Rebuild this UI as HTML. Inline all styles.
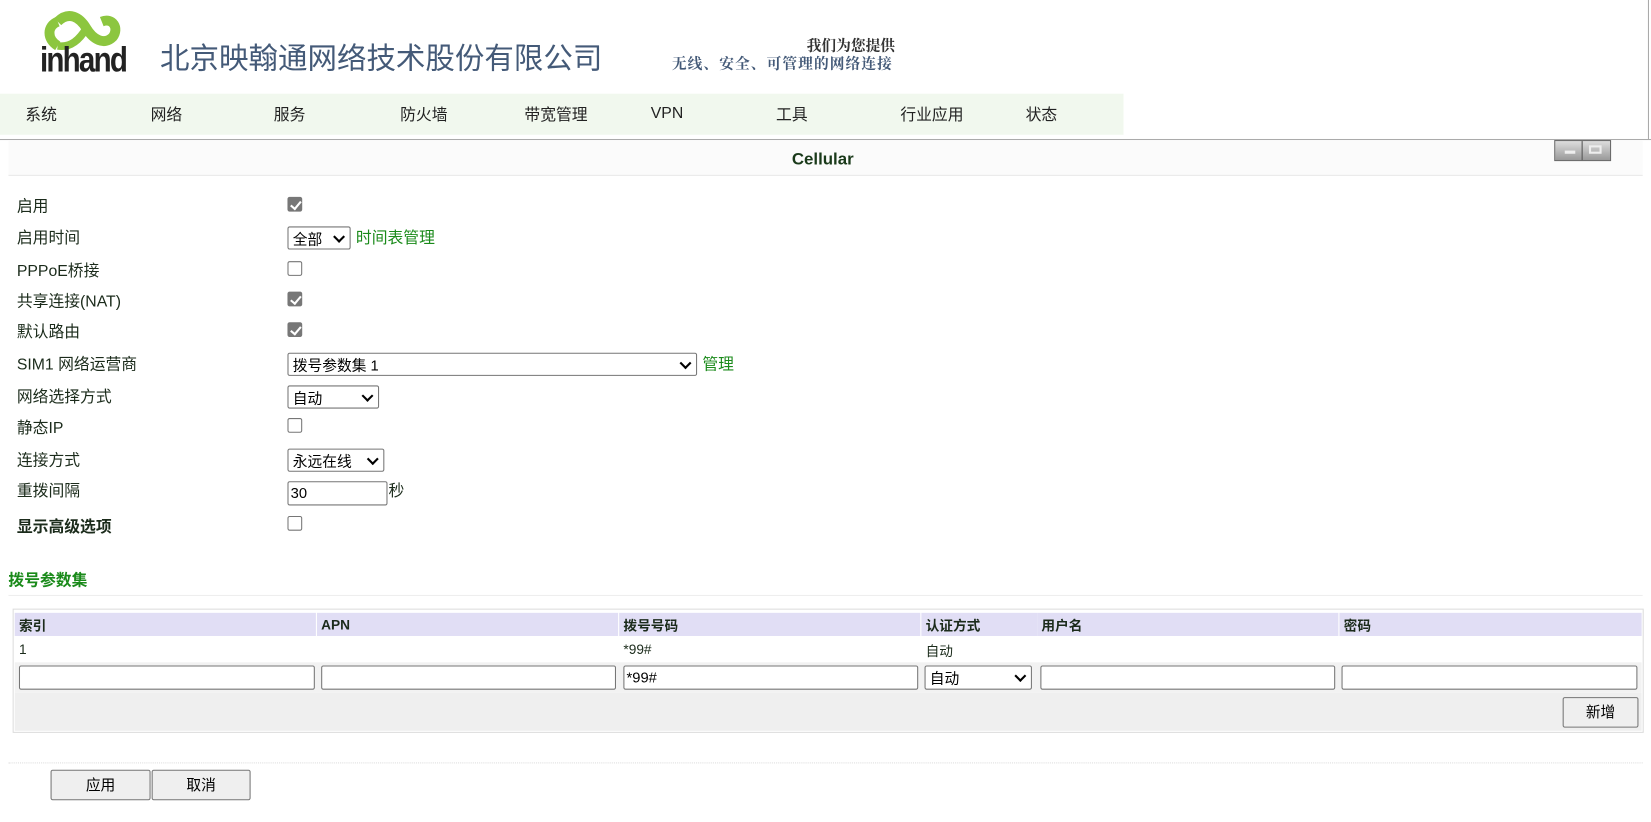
<!DOCTYPE html>
<html><head><meta charset="utf-8"><style>
*{margin:0;padding:0;box-sizing:border-box}
html,body{width:1651px;height:822px;overflow:hidden;background:#fff}
#w{width:1568px;height:781px;position:relative;transform:scale(1.0530);transform-origin:0 0;font-family:"Liberation Sans","Noto Sans CJK SC",sans-serif;font-size:15px;color:#1b2b1b}
.a{position:absolute}
.nav{left:0;top:89px;width:1067px;height:39px;background:#f1f8ee}
.nav span{position:absolute;top:9px;font-size:15px;color:#222}
.lbl{left:16px;font-size:15px;margin-top:-2px}
.cb{width:14px;height:14px;border:1px solid #767676;border-radius:2px;background:#fff;left:273px}
.cb.on{background:#777;border-color:#777}
.cb.on:after{content:"";position:absolute;left:4px;top:1px;width:4px;height:8px;border:solid #fff;border-width:0 2px 2px 0;transform:rotate(40deg)}
.sel{border:1px solid #767676;border-radius:2px;background:#fff;height:22px;font-size:14px;color:#000;padding:1px 4px;left:273px}
.sel:after{content:"";position:absolute;right:6px;top:5px;width:6px;height:6px;border:solid #000;border-width:0 2px 2px 0;transform:rotate(45deg)}
.inp{border:1px solid #767676;border-radius:2px;background:#fff;height:23px;font-size:14px;color:#000;padding:2px 2px}
.g{color:#1a8a1a}
.th{top:582px;height:22px;background:#e1def5;font-weight:bold;font-size:13px;padding:2px 4px}
.td{top:606px;font-size:13px;padding:3px 4px}
.btn{border:1px solid #767676;border-radius:2px;background:#efefef;font-size:14px;color:#000;text-align:center;line-height:27px;height:29px}
</style></head><body><div id="w">
<div class="a" style="left:1565px;top:0;width:1px;height:132px;background:#aaa"></div>
<svg class="a" style="left:40px;top:8px" width="84" height="46" viewBox="0 0 80 44">
<path d="M14 12 C24 2,34 8,40 18 C46 28,56 34,64 26 C70 18,64 8,54 12" fill="none" stroke="#8cc63f" stroke-width="9"/>
<path d="M14 34 C4 28,4 16,14 12" fill="none" stroke="#8cc63f" stroke-width="9"/>
<path d="M40 18 C34 28,26 36,14 34" fill="none" stroke="#8cc63f" stroke-width="7"/>
</svg>
<div class="a" style="left:38px;top:38px;font-size:33px;font-weight:bold;letter-spacing:-2px;color:#222;transform:scaleX(0.85);transform-origin:0 0">inhand</div>
<div class="a" style="left:152px;top:34px;font-size:28px;color:#445a78;font-family:'Noto Sans CJK SC',sans-serif">北京映翰通网络技术股份有限公司</div>
<div class="a" style="left:766px;top:33px;font-size:14px;font-weight:bold;color:#333;font-family:'Noto Serif CJK SC',serif">我们为您提供</div>
<div class="a" style="left:638px;top:50px;font-size:14px;font-weight:bold;color:#445a78;font-family:'Noto Serif CJK SC',serif;letter-spacing:1px">无线、安全、可管理的网络连接</div>
<div class="a nav">
<span style="left:24px">系统</span><span style="left:143px">网络</span><span style="left:260px">服务</span><span style="left:380px">防火墙</span><span style="left:498px">带宽管理</span><span style="left:618px;top:10px">VPN</span><span style="left:737px">工具</span><span style="left:855px">行业应用</span><span style="left:974px">状态</span>
</div>
<div class="a" style="left:0;top:132px;width:1568px;height:1px;background:#aaa"></div>
<div class="a" style="left:8px;top:133px;width:1552px;height:34px;background:#fbfbfb;border-bottom:1px solid #e8e8e8"></div>
<div class="a" style="left:752px;top:143px;font-weight:bold;font-size:16px;color:#1a3a1a">Cellular</div>
<div class="a" style="left:1476px;top:133px;width:54px;height:20px;background:linear-gradient(#ddd,#999);border:1px solid #666"></div>
<div class="a" style="left:1486px;top:143px;width:10px;height:3px;background:#eee"></div>
<div class="a" style="left:1502px;top:134px;width:1px;height:18px;background:#555"></div>
<div class="a" style="left:1509px;top:138px;width:12px;height:8px;border:2px solid #eee"></div>

<div class="a lbl" style="top:187px">启用</div><div class="a cb on" style="top:187px"></div>
<div class="a lbl" style="top:217px">启用时间</div><div class="a sel" style="top:215px;width:60px">全部</div><div class="a g" style="left:338px;top:215px">时间表管理</div>
<div class="a lbl" style="top:248px">PPPoE桥接</div><div class="a cb" style="top:248px"></div>
<div class="a lbl" style="top:277px">共享连接(NAT)</div><div class="a cb on" style="top:277px"></div>
<div class="a lbl" style="top:306px">默认路由</div><div class="a cb on" style="top:306px"></div>
<div class="a lbl" style="top:337px">SIM1 网络运营商</div><div class="a sel" style="top:335px;width:389px">拨号参数集 1</div><div class="a g" style="left:667px;top:335px">管理</div>
<div class="a lbl" style="top:368px">网络选择方式</div><div class="a sel" style="top:366px;width:87px">自动</div>
<div class="a lbl" style="top:397px">静态IP</div><div class="a cb" style="top:397px"></div>
<div class="a lbl" style="top:428px">连接方式</div><div class="a sel" style="top:426px;width:92px">永远在线</div>
<div class="a lbl" style="top:457px">重拨间隔</div><div class="a inp" style="left:273px;top:457px;width:95px">30</div><div class="a" style="left:369px;top:455px">秒</div>
<div class="a lbl" style="top:491px;font-weight:bold">显示高级选项</div><div class="a cb" style="top:490px"></div>

<div class="a" style="left:8px;top:540px;font-weight:bold;color:#1a8a1a;font-size:15px">拨号参数集</div>
<div class="a" style="left:8px;top:565px;width:1552px;height:1px;background:#eee"></div>
<div class="a" style="left:12px;top:578px;width:1549px;height:118px;border:1px solid #ddd;background:#fff"></div>
<div class="a" style="left:14px;top:658px;width:1545px;height:36px;background:#efefef"></div>
<div class="a" style="left:14px;top:629px;width:1545px;height:29px;background:#f2f2f2"></div>
<div class="a th" style="left:14px;width:286px">索引</div>
<div class="a th" style="left:301px;width:286px;padding-top:4px">APN</div>
<div class="a th" style="left:588px;width:286px">拨号号码</div>
<div class="a th" style="left:875px;width:110px">认证方式</div>
<div class="a th" style="left:985px;width:286px">用户名</div>
<div class="a th" style="left:1272px;width:287px">密码</div>
<div class="a td" style="left:14px">1</div>
<div class="a td" style="left:588px">*99#</div>
<div class="a td" style="left:875px;top:605px">自动</div>
<div class="a inp" style="left:18px;top:632px;width:281px"></div>
<div class="a inp" style="left:305px;top:632px;width:280px"></div>
<div class="a inp" style="left:592px;top:632px;width:280px">*99#</div>
<div class="a sel" style="left:878px;top:632px;width:102px;height:23px">自动</div>
<div class="a inp" style="left:988px;top:632px;width:280px"></div>
<div class="a inp" style="left:1274px;top:632px;width:281px"></div>
<div class="a btn" style="left:1484px;top:662px;width:72px">新增</div>
<div class="a" style="left:8px;top:724px;width:1552px;border-top:1px dotted #ddd"></div>
<div class="a btn" style="left:48px;top:731px;width:95px">应用</div>
<div class="a btn" style="left:144px;top:731px;width:94px">取消</div>
</div></body></html>
